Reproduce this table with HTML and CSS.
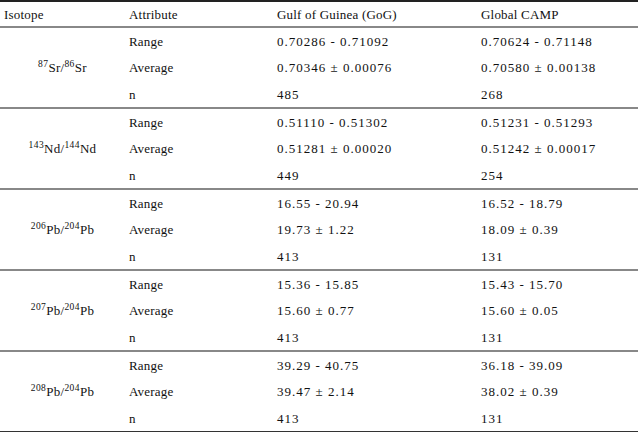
FILE: index.html
```html
<!DOCTYPE html>
<html>
<head>
<meta charset="utf-8">
<link rel="stylesheet" href="styles.css">
</head>
<body>
<div class="tbl">
  <div class="head">
    <div class="c">Isotope</div>
    <div class="c">Attribute</div>
    <div class="c">Gulf of Guinea (GoG)</div>
    <div class="c">Global CAMP</div>
  </div>
  <div class="group">
    <div class="iso"><sup>87</sup>Sr/<sup>86</sup>Sr</div>
    <div class="c">Range</div><div class="c num">0.70286 - 0.71092</div><div class="c num">0.70624 - 0.71148</div>
    <div class="c">Average</div><div class="c num">0.70346 ± 0.00076</div><div class="c num">0.70580 ± 0.00138</div>
    <div class="c">n</div><div class="c num">485</div><div class="c num">268</div>
  </div>
  <div class="group">
    <div class="iso"><sup>143</sup>Nd/<sup>144</sup>Nd</div>
    <div class="c">Range</div><div class="c num">0.51110 - 0.51302</div><div class="c num">0.51231 - 0.51293</div>
    <div class="c">Average</div><div class="c num">0.51281 ± 0.00020</div><div class="c num">0.51242 ± 0.00017</div>
    <div class="c">n</div><div class="c num">449</div><div class="c num">254</div>
  </div>
  <div class="group">
    <div class="iso"><sup>206</sup>Pb/<sup>204</sup>Pb</div>
    <div class="c">Range</div><div class="c num">16.55 - 20.94</div><div class="c num">16.52 - 18.79</div>
    <div class="c">Average</div><div class="c num">19.73 ± 1.22</div><div class="c num">18.09 ± 0.39</div>
    <div class="c">n</div><div class="c num">413</div><div class="c num">131</div>
  </div>
  <div class="group">
    <div class="iso"><sup>207</sup>Pb/<sup>204</sup>Pb</div>
    <div class="c">Range</div><div class="c num">15.36 - 15.85</div><div class="c num">15.43 - 15.70</div>
    <div class="c">Average</div><div class="c num">15.60 ± 0.77</div><div class="c num">15.60 ± 0.05</div>
    <div class="c">n</div><div class="c num">413</div><div class="c num">131</div>
  </div>
  <div class="group last">
    <div class="iso"><sup>208</sup>Pb/<sup>204</sup>Pb</div>
    <div class="c">Range</div><div class="c num">39.29 - 40.75</div><div class="c num">36.18 - 39.09</div>
    <div class="c">Average</div><div class="c num">39.47 ± 2.14</div><div class="c num">38.02 ± 0.39</div>
    <div class="c">n</div><div class="c num">413</div><div class="c num">131</div>
  </div>
</div>
</body>
</html>
```

FILE: styles.css
```css
html, body {
  margin: 0;
  padding: 0;
  background: #fff;
}
body {
  font-family: "Liberation Serif", "Times New Roman", serif;
  font-size: 13px;
  color: #111;
}
.tbl {
  width: 638px;
}
.head {
  display: grid;
  grid-template-columns: 125px 148px 204px 161px;
  height: 24px;
  border-top: 2px solid #222;
  border-bottom: 2px solid #888;
  align-items: center;
}
.group {
  display: grid;
  grid-template-columns: 125px 148px 204px 161px;
  grid-template-rows: 26px 27px 26px;
  align-items: center;
  border-bottom: 2px solid #888;
}
.group.last {
  border-bottom-color: #333;
}
.c {
  padding-left: 4px;
  padding-top: 1px;
  white-space: nowrap;
  letter-spacing: 0.2px;
}
.num {
  letter-spacing: 1px;
}
.iso {
  grid-row: 1 / span 3;
  text-align: center;
  white-space: nowrap;
  padding-top: 1px;
  letter-spacing: 0.3px;
}
sup {
  font-size: 9.5px;
  vertical-align: 5px;
  line-height: 0;
  letter-spacing: 0.4px;
}
```
